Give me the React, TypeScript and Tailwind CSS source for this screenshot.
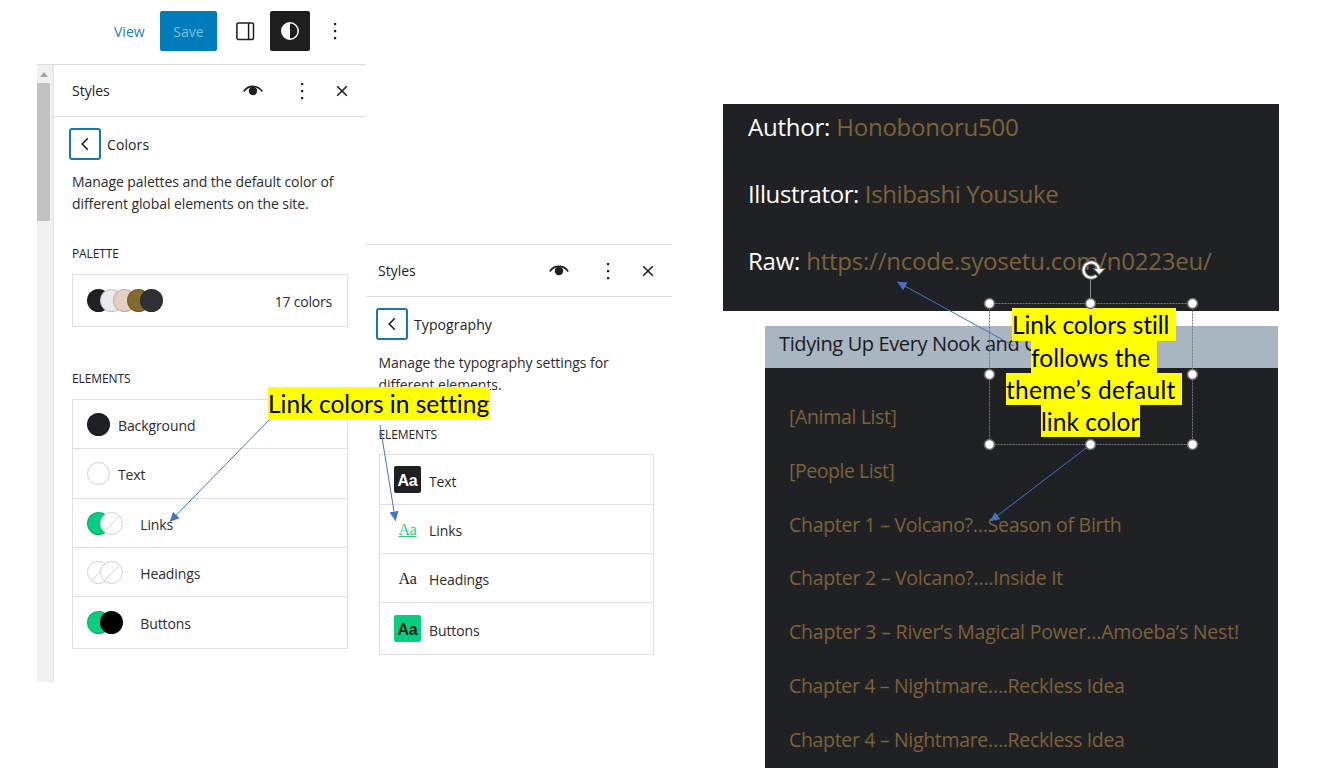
import type { ReactNode } from 'react'
import clsx from 'clsx'

type SwatchKind = { color?: string; empty?: boolean }

const PALETTE = ['bg-[#1f2024]', 'bg-[#e9e9ee]', 'bg-[#e6cfc1]', 'bg-[#84692e]', 'bg-[#303136]']

const COLOR_ROWS: { label: string; swatches: SwatchKind[]; height: string }[] = [
  { label: 'Background', swatches: [{ color: 'bg-[#1f2024]' }], height: 'h-[49px]' },
  { label: 'Text', swatches: [{ color: 'bg-white' }], height: 'h-[50px]' },
  { label: 'Links', swatches: [{ color: 'bg-[#06ce80]' }, { empty: true }], height: 'h-[49px]' },
  { label: 'Headings', swatches: [{ empty: true }, { empty: true }], height: 'h-[49px]' },
  { label: 'Buttons', swatches: [{ color: 'bg-[#06ce80]' }, { color: 'bg-black' }], height: 'h-[51px]' }
]

const TYPE_ROWS = [
  { label: 'Text', sample: "bg-[#1f2024] text-white font-['Liberation_Sans'] font-bold", height: 'h-[50px]' },
  { label: 'Links', sample: "text-[#34c786] underline font-['Liberation_Serif']", height: 'h-[49px]' },
  { label: 'Headings', sample: "text-[#222] font-['Liberation_Serif']", height: 'h-[49px]' },
  { label: 'Buttons', sample: "bg-[#06ce80] text-[#16251e] font-['Liberation_Sans'] font-bold", height: 'h-[51px]' }
]

const META = [
  { label: 'Author:', value: 'Honobonoru500', tracking: 'tracking-[-0.22px]' },
  { label: 'Illustrator:', value: 'Ishibashi Yousuke', tracking: 'tracking-[-0.4px]' },
  { label: 'Raw:', value: 'https://ncode.syosetu.com/n0223eu/', tracking: 'tracking-[-0.22px]' }
]

const CHAPTERS = [
  { title: '[Animal List]', tracking: 'tracking-[-0.35px]' },
  { title: '[People List]', tracking: 'tracking-[-0.45px]' },
  { title: 'Chapter 1 – Volcano?…Season of Birth', tracking: 'tracking-[-0.29px]' },
  { title: 'Chapter 2 – Volcano?….Inside It', tracking: 'tracking-[-0.25px]' },
  { title: 'Chapter 3 – River’s Magical Power…Amoeba’s Nest!', tracking: 'tracking-[-0.2px]' },
  { title: 'Chapter 4 – Nightmare….Reckless Idea', tracking: 'tracking-[-0.33px]' },
  { title: 'Chapter 4 – Nightmare….Reckless Idea', tracking: 'tracking-[-0.33px]' }
]

const DotsIcon = () => (
  <svg width="24" height="24" viewBox="0 0 24 24" fill="#1e1e1e">
    <rect x="11" y="4" width="2.2" height="2.2" />
    <rect x="11" y="11" width="2.2" height="2.2" />
    <rect x="11" y="18" width="2.2" height="2.2" />
  </svg>
)

const EyeIcon = () => (
  <svg width="20" height="14" viewBox="0 0 20 14" fill="none">
    <path d="M.8 7.5C5.2.7 14.8.7 19.2 7.5" stroke="#1e1e1e" strokeWidth="1.6" />
    <circle cx="10" cy="7" r="4.2" fill="#1e1e1e" />
  </svg>
)

const CloseIcon = () => (
  <svg width="12" height="12" viewBox="0 0 12 12" fill="none">
    <path d="M1.2 1.2l9.6 9.6M10.8 1.2l-9.6 9.6" stroke="#1e1e1e" strokeWidth="1.6" />
  </svg>
)

const TopBar = () => (
  <div className="flex h-[65px] items-start border-b border-[#dcdcdc] pt-[11px] pl-[77px]">
    <span className="w-[46px] text-[14px] leading-[41px] text-[#2a7cb4]">View</span>
    <button className="flex h-10 w-[57px] items-center justify-center rounded-[2px] bg-[#007cba] text-[14px] text-[#7fbddc]">
      Save
    </button>
    <div className="flex h-10 w-[53px] items-center pl-[19px]">
      <svg width="19" height="19" viewBox="0 0 19 19" fill="none" stroke="#1e1e1e" strokeWidth="1.5">
        <rect x=".9" y=".9" width="16.6" height="16.6" rx="1.5" />
        <path d="M12.6 1v16.5" />
      </svg>
    </div>
    <div className="flex size-10 items-center justify-center rounded-[2px] bg-[#1e1e1e]">
      <svg width="20" height="20" viewBox="0 0 20 20">
        <circle cx="10" cy="10" r="8.2" fill="none" stroke="#fff" strokeWidth="1.5" />
        <path d="M10 1.8a8.2 8.2 0 0 0 0 16.4z" fill="#fff" />
      </svg>
    </div>
    <div className="flex h-10 items-center pl-[12.5px]">
      <DotsIcon />
    </div>
  </div>
)

const PanelHeader = () => (
  <div className="flex h-[51px] items-center pr-[18.5px]">
    <span className="grow text-[14px] font-medium text-[#222]">Styles</span>
    <EyeIcon />
    <div className="ml-[27px]">
      <DotsIcon />
    </div>
    <div className="ml-[22px]">
      <CloseIcon />
    </div>
  </div>
)

const PanelTitle = ({ title }: { title: string }) => (
  <div className="-ml-[3px] flex h-8 items-center gap-[6px]">
    <button className="flex size-8 items-center justify-center rounded-[3px] border-2 border-[#1b76aa]">
      <svg width="10" height="14" viewBox="0 0 10 14" fill="none">
        <path d="M7.8 1.2L2.2 7l5.6 5.8" stroke="#1e1e1e" strokeWidth="1.6" />
      </svg>
    </button>
    <span className="text-[14px] font-medium tracking-[0.1px] text-[#222]">{title}</span>
  </div>
)

const Swatch = ({ color, empty, overlap }: SwatchKind & { overlap?: boolean }) => (
  <span
    className={clsx(
      'block size-[23px] shrink-0 overflow-hidden rounded-full border',
      overlap && '-ml-[9.8px]',
      color === 'bg-white' || empty ? 'border-[#cfcfcf] bg-white' : 'border-black/15',
      color
    )}
  >
    {empty && (
      <svg width="21" height="21" viewBox="0 0 21 21">
        <path d="M4 18L18 3.5" stroke="#cfcfcf" />
      </svg>
    )}
  </span>
)

const SectionLabel = ({ children }: { children: ReactNode }) => (
  <h3 className="h-4 text-[12px] leading-4 font-medium tracking-[-0.1px] text-[#222]">{children}</h3>
)

const ColorsPanel = () => (
  <section className="flex h-[682px] w-[329px] flex-col">
    <TopBar />
    <div className="flex grow">
      <div className="flex w-[17px] flex-col border-r-2 border-[#e9e9e9] bg-[#f1f1f1]">
        <div className="flex h-[18px] w-[13px] items-center justify-center">
          <svg width="8" height="5" viewBox="0 0 8 5">
            <path d="M0 5l4-5 4 5z" fill="#a3a3a3" />
          </svg>
        </div>
        <div className="h-[138px] w-[13px] bg-[#c1c1c1]" />
      </div>
      <div className="flex grow flex-col">
        <div className="border-b border-[#dcdcdc] pl-[18px]">
          <PanelHeader />
        </div>
        <div className="flex flex-col pr-[18px] pl-[18px]">
          <div className="mt-[11px]">
            <PanelTitle title="Colors" />
          </div>
          <p className="mt-[11px] h-11 text-[14px] leading-[22px] tracking-[-0.08px] whitespace-nowrap text-[#2c2c2c]">
            Manage palettes and the default color of
            <br />
            different global elements on the site.
          </p>
          <div className="mt-[31px]">
            <SectionLabel>PALETTE</SectionLabel>
          </div>
          <div className="mt-[12px] flex h-[53px] items-center justify-between border border-[#e0e0e0] pr-[15px] pl-[14px]">
            <div className="flex">
              {PALETTE.map((color, i) => (
                <Swatch key={color} color={color} overlap={i > 0} />
              ))}
            </div>
            <span className="pt-[1px] text-[14px] tracking-[-0.2px] text-[#2c2c2c]">17 colors</span>
          </div>
          <div className="mt-[44px]">
            <SectionLabel>ELEMENTS</SectionLabel>
          </div>
          <ul className="mt-[12px] border border-[#e0e0e0]">
            {COLOR_ROWS.map((row) => (
              <li
                key={row.label}
                className={clsx('flex items-center border-b border-[#e0e0e0] pl-[14px] last:border-b-0', row.height)}
              >
                <div className="flex">
                  {row.swatches.map((swatch, i) => (
                    <Swatch key={i} {...swatch} overlap={i > 0} />
                  ))}
                </div>
                <span
                  className={clsx(
                    'pt-[2px] text-[14px] tracking-[-0.1px] text-[#2c2c2c]',
                    row.swatches.length > 1 ? 'ml-[17px]' : 'ml-[8px]'
                  )}
                >
                  {row.label}
                </span>
              </li>
            ))}
          </ul>
        </div>
      </div>
    </div>
  </section>
)

const TypographyPanel = () => (
  <section className="mt-[244px] flex h-[438px] w-[306px] flex-col border-t border-[#dcdcdc]">
    <div className="border-b border-[#dcdcdc] pl-[12px]">
      <PanelHeader />
    </div>
    <div className="flex flex-col pr-[18px] pl-[13px]">
      <div className="mt-[11px]">
        <PanelTitle title="Typography" />
      </div>
      <p className="-ml-[0.5px] mt-[12px] h-11 text-[14px] leading-[22px] tracking-[-0.06px] whitespace-nowrap text-[#2c2c2c]">
        Manage the typography settings for
        <br />
        different elements.
      </p>
      <div className="mt-[31px] -ml-[0.6px]">
        <SectionLabel>ELEMENTS</SectionLabel>
      </div>
      <ul className="mt-[11px] border border-[#e0e0e0]">
        {TYPE_ROWS.map((row) => (
          <li
            key={row.label}
            className={clsx('flex items-center border-b border-[#e0e0e0] pl-[14px] last:border-b-0', row.height)}
          >
            <span
              className={clsx(
                'flex size-[27px] items-center justify-center rounded-[2px] pt-[2px] text-[16px] tracking-[-0.3px]',
                row.sample
              )}
            >
              Aa
            </span>
            <span className="ml-[8px] pt-[3px] text-[14px] tracking-[-0.1px] text-[#2c2c2c]">{row.label}</span>
          </li>
        ))}
      </ul>
    </div>
  </section>
)

const NovelPreview = () => (
  <div className="mt-[104px] ml-[51px] flex w-[556px] flex-col">
    <div className="flex h-[207px] flex-col bg-[#202124] pt-[7.4px] pl-[25px] text-[24px]">
      {META.map((item) => (
        <p key={item.label} className={clsx('mb-[35px] h-8 leading-8 whitespace-nowrap', item.tracking)}>
          <span className="text-white">{item.label}</span> <a className="text-[#7d6139]">{item.value}</a>
        </p>
      ))}
    </div>
    <div className="mt-[15px] ml-[42px] h-[442px] w-[513px] bg-[#202124]">
      <h2 className="h-[42px] bg-[#a9b5c1] pl-[14px] text-[20px] leading-[35px] tracking-[-0.38px] whitespace-nowrap text-[#1a1b1e]">
        Tidying Up Every Nook and C
      </h2>
      <ul className="flex flex-col gap-[26px] pt-[35px] pl-[24px]">
        {CHAPTERS.map((chapter, i) => (
          <li
            key={i}
            className={clsx('h-[27.8px] text-[19.5px] leading-[28px] whitespace-nowrap text-[#7d6139]', chapter.tracking)}
          >
            {chapter.title}
          </li>
        ))}
      </ul>
    </div>
  </div>
)

const HANDLES = [
  [989, 303],
  [1090, 303],
  [1192, 303],
  [989, 374],
  [1192, 374],
  [989, 444],
  [1090, 444],
  [1192, 444]
]

// connector arrows drawn above the panels, below the callouts
const Arrows = () => (
  <svg className="pointer-events-none absolute top-0 left-0" width="1335" height="776" viewBox="0 0 1335 776">
    <defs>
      <marker id="head" markerWidth="10" markerHeight="9" refX="9" refY="4.5" orient="auto" markerUnits="userSpaceOnUse">
        <path d="M0 0l9.5 4.5L0 9z" fill="#4472c4" />
      </marker>
    </defs>
    <g stroke="#4472c4" strokeWidth="1">
      <line x1="271" y1="418" x2="170" y2="521.5" markerEnd="url(#head)" />
      <line x1="380" y1="425" x2="395.5" y2="520.5" markerEnd="url(#head)" />
      <line x1="1014" y1="346" x2="897.5" y2="282" markerEnd="url(#head)" />
      <line x1="1090" y1="445" x2="990.5" y2="521" markerEnd="url(#head)" />
    </g>
  </svg>
)

const SelectionFrame = () => (
  <svg className="pointer-events-none absolute top-0 left-0" width="1335" height="776" viewBox="0 0 1335 776" fill="none">
    <rect x="989.5" y="303.5" width="203" height="141" stroke="#777" strokeDasharray="2 1" />
    <path d="M1090.5 278v20" stroke="#8a8a8a" />
    {HANDLES.map(([x, y]) => (
      <circle key={`${x}-${y}`} cx={x + 0.5} cy={y + 0.5} r="5" fill="#fff" stroke="#6b6b6b" strokeWidth="1.6" />
    ))}
    {/* rotate handle */}
    <path d="M1096.500 275.500a7.600 7.600 0 1 1 2.200-6.500" stroke="#666" strokeWidth="4.500" />
    <path d="M1094.500 269h9.500l-4.700 5z" fill="#fff" stroke="#666" strokeWidth="2" />
    <path d="M1096.500 275.500a7.600 7.600 0 1 1 2.200-6.500" stroke="#fff" strokeWidth="2.200" />
    <path d="M1094.500 269h9.500l-4.700 5z" fill="#fff" />
  </svg>
)

const LINES = [
  { text: 'Link colors still', box: 'ml-[6px] w-[164px] h-[33px] tracking-[-0.08px]' },
  { text: 'follows the', box: 'ml-[25px] w-[126px] h-[32px] tracking-[0.05px]' },
  { text: 'theme’s default', box: 'w-[176px] h-[32px] tracking-[0.3px]' },
  { text: 'link color', box: 'ml-[35px] w-[99px] h-[32px] tracking-[0.05px]' }
]

const App = () => {
  return (
    <main className="relative flex h-[776px] w-[1335px] items-start overflow-hidden bg-white pl-[37px] font-['Open_Sans',sans-serif]">
      <ColorsPanel />
      <TypographyPanel />
      <NovelPreview />
      <Arrows />
      <div className="absolute top-[387px] left-[268px] h-[33px] w-[222px] bg-[#ffff00] font-['Lato',sans-serif] text-[24.5px] leading-[34px] tracking-[0.02px] whitespace-nowrap text-black [font-variant-ligatures:none]">
        Link colors in setting
      </div>
      <div className="absolute top-[308px] left-[1006px] flex flex-col font-['Lato',sans-serif] text-[24.5px] leading-[34px] text-black [font-variant-ligatures:none]">
        {LINES.map((line) => (
          <span key={line.text} className={clsx('block bg-[#ffff00] whitespace-nowrap', line.box)}>
            {line.text}
          </span>
        ))}
      </div>
      <SelectionFrame />
    </main>
  )
}

export default App
